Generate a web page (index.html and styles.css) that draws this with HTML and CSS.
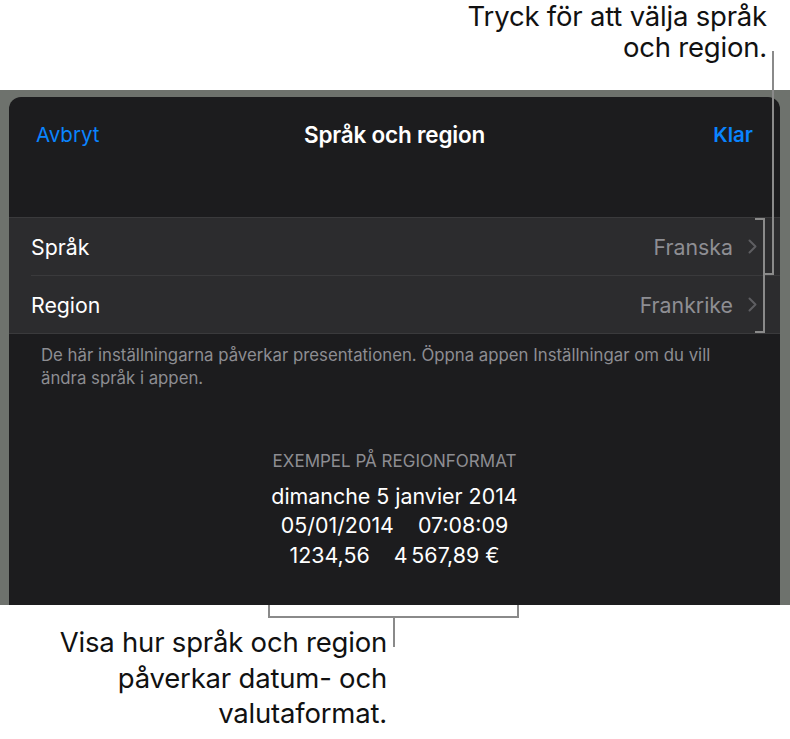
FILE: index.html
```html
<!DOCTYPE html>
<html lang="sv">
  <head>
    <meta charset="UTF-8" />
    <meta name="viewport" content="width=device-width, initial-scale=1.0" />
    <title>Språk och region</title>
    <link rel="stylesheet" href="styles.css">
  </head>
  <body>
    <!-- Förklaring överst -->
    <div class="callout callout-top">
      <p>Tryck för att välja språk<br />och region.</p>
    </div>

    <!-- iPad-ramen med dialogen -->
    <div class="frame">
      <div class="sheet">
        <div class="nav">
          <span class="nav-btn">Avbryt</span>
          <span class="nav-title">Språk och region</span>
          <span class="nav-btn done">Klar</span>
        </div>

        <div class="list">
          <div class="row">
            <span class="label">Språk</span>
            <span class="value">Franska</span>
            <svg class="chevron" width="9" height="15" viewBox="0 0 9 15">
              <polyline points="1.5,1.5 7.5,7.5 1.5,13.5" />
            </svg>
          </div>
          <div class="row">
            <span class="label">Region</span>
            <span class="value">Frankrike</span>
            <svg class="chevron" width="9" height="15" viewBox="0 0 9 15">
              <polyline points="1.5,1.5 7.5,7.5 1.5,13.5" />
            </svg>
          </div>
        </div>

        <p class="footnote">
          De här inställningarna påverkar presentationen. Öppna appen Inställningar om du vill
          ändra språk i appen.
        </p>

        <div class="sample">
          <p class="sample-head">EXEMPEL PÅ REGIONFORMAT</p>
          <p>dimanche 5 janvier 2014</p>
          <p>05/01/2014<span class="sp"></span>07:08:09</p>
          <p>1234,56<span class="sp"></span>4&#8239;567,89 €</p>
        </div>
      </div>
    </div>

    <!-- Förklaring nederst -->
    <div class="callout callout-bottom">
      <p>Visa hur språk och region<br />påverkar datum- och<br />valutaformat.</p>
    </div>

    <!-- Hänvisningslinjer -->
    <svg class="leaders" width="790" height="739" viewBox="0 0 790 739">
      <path d="M773 51 V274 H764" />
      <path d="M755 219 H764 V332 H755" />
      <path d="M269 605 V617 H518 V605" />
      <path d="M394 617 V647" />
    </svg>
  </body>
</html>
```

FILE: styles.css
```css
body {
  margin: 0;
  font-family: Inter, "Noto Sans", sans-serif;
  background: #fff;
  position: relative;
  width: 790px;
  height: 739px;
  overflow: hidden;
}
p {
  margin: 0;
}
.callout {
  color: #111;
  font-size: 27.5px;
  line-height: 31px;
  letter-spacing: -0.2px;
}
.callout-top {
  height: 90px;
  box-sizing: border-box;
  text-align: right;
  padding: 1px 23px 0 0;
  line-height: 30.5px;
}
.callout-bottom {
  width: 387px;
  text-align: right;
  padding-top: 20px;
  line-height: 35.5px;
}
.frame {
  background-color: #6e726d;
  height: 515px;
  padding: 7px 10px 0 9px;
  box-sizing: border-box;
}
.sheet {
  background-color: #1c1c1e;
  height: 100%;
  border-radius: 12px 12px 0 0;
  color: #fff;
}
.nav {
  height: 74px;
  display: flex;
  align-items: center;
  justify-content: space-between;
  padding: 0 27px 0 27px;
  font-size: 20.5px;
  margin-bottom: 46px;
}
.nav-btn {
  color: #0a84ff;
  width: 90px;
}
.nav-btn.done {
  font-weight: 600;
  text-align: right;
}
.nav-title {
  font-weight: 600;
  font-size: 22.5px;
  letter-spacing: -0.2px;
}
.list {
  background-color: #2c2c2e;
  border-top: 1px solid #3a3a3c;
  border-bottom: 1px solid #3a3a3c;
}
.row {
  display: flex;
  align-items: center;
  height: 57px;
  margin-left: 22px;
  padding-right: 23px;
  font-size: 21.3px;
}
.row + .row {
  border-top: 1px solid #3a3a3c;
}
.label {
  flex: 1;
}
.value {
  color: #8e8e93;
  margin-right: 15px;
}
.chevron polyline {
  fill: none;
  stroke: #5e5e62;
  stroke-width: 2;
  stroke-linecap: round;
  stroke-linejoin: round;
}
.footnote {
  color: #8d8d92;
  font-size: 16.8px;
  line-height: 23px;
  padding: 10px 30px 0 32px;
}
.sample {
  text-align: center;
  margin-top: 57px;
  font-size: 21.4px;
  line-height: 29.5px;
}
.sample-head {
  color: #8d8d92;
  font-size: 17px;
  margin-bottom: 5px;
}
.sp {
  display: inline-block;
  width: 24px;
}
.leaders {
  position: absolute;
  left: 0;
  top: 0;
  pointer-events: none;
}
.leaders path {
  fill: none;
  stroke: #8a8a8a;
  stroke-width: 2;
}
```
